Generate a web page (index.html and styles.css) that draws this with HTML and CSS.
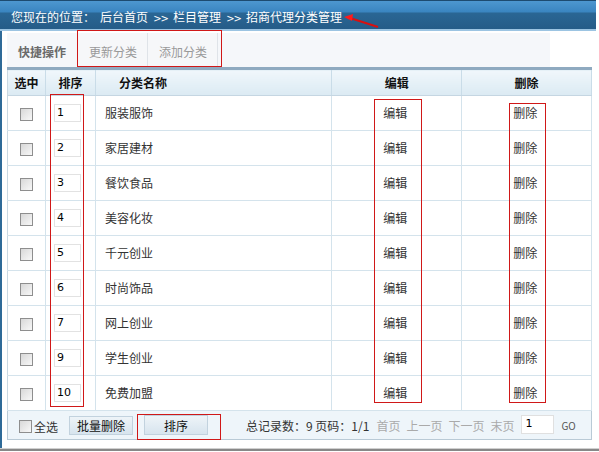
FILE: index.html
```html
<!DOCTYPE html>
<html>
<head>
<meta charset="utf-8">
<link rel="stylesheet" href="styles.css">
</head>
<body>
<div class="topbar">
  <span class="crumb">您现在的位置：</span>
  <span class="path">后台首页<span class="sep">&gt;&gt;</span>栏目管理<span class="sep">&gt;&gt;</span>招商代理分类管理</span>
  <svg class="arrow" width="36" height="16" viewBox="0 0 36 16"><path d="M6 4 L34 13" stroke="#d81010" stroke-width="2" fill="none"/><path d="M0 3 L9 0 L8 7 Z" fill="#ff1a1a"/></svg>
</div>
<div class="main">
  <div class="tabs">
    <span class="tab-title">快捷操作</span>
    <div class="tabgroup">
      <span class="tab">更新分类</span>
      <span class="tab">添加分类</span>
    </div>
  </div>
  <table class="grid">
    <thead>
      <tr><th class="c1">选中</th><th class="c2">排序</th><th class="c3">分类名称</th><th class="c4">编辑</th><th class="c5">删除</th></tr>
    </thead>
    <tbody>
      <tr><td><span class="cb"></span></td><td><span class="num">1</span></td><td class="name">服装服饰</td><td class="ed">编辑</td><td class="del">删除</td></tr>
      <tr><td><span class="cb"></span></td><td><span class="num">2</span></td><td class="name">家居建材</td><td class="ed">编辑</td><td class="del">删除</td></tr>
      <tr><td><span class="cb"></span></td><td><span class="num">3</span></td><td class="name">餐饮食品</td><td class="ed">编辑</td><td class="del">删除</td></tr>
      <tr><td><span class="cb"></span></td><td><span class="num">4</span></td><td class="name">美容化妆</td><td class="ed">编辑</td><td class="del">删除</td></tr>
      <tr><td><span class="cb"></span></td><td><span class="num">5</span></td><td class="name">千元创业</td><td class="ed">编辑</td><td class="del">删除</td></tr>
      <tr><td><span class="cb"></span></td><td><span class="num">6</span></td><td class="name">时尚饰品</td><td class="ed">编辑</td><td class="del">删除</td></tr>
      <tr><td><span class="cb"></span></td><td><span class="num">7</span></td><td class="name">网上创业</td><td class="ed">编辑</td><td class="del">删除</td></tr>
      <tr><td><span class="cb"></span></td><td><span class="num">9</span></td><td class="name">学生创业</td><td class="ed">编辑</td><td class="del">删除</td></tr>
      <tr><td><span class="cb"></span></td><td><span class="num">10</span></td><td class="name">免费加盟</td><td class="ed">编辑</td><td class="del">删除</td></tr>
    </tbody>
  </table>
  <div class="footer">
    <span class="cb"></span><span class="all">全选</span>
    <span class="btn btn-del">批量删除</span>
    <span class="btn btn-sort">排序</span>
    <span class="stats">总记录数：9 页码：1/1</span>
    <span class="pg">首页</span><span class="pg">上一页</span><span class="pg">下一页</span><span class="pg">末页</span>
    <span class="pginput">1</span>
    <span class="go">GO</span>
  </div>
  <div class="mark mark-tabs"></div>
  <div class="mark mark-sort"></div>
  <div class="mark mark-ed"></div>
  <div class="mark mark-del"></div>
  <div class="mark mark-btn"></div>
</div>
<div class="bottomline"></div>
</body>
</html>
```

FILE: styles.css
```css
html, body {
  margin: 0;
  padding: 0;
  background: #ffffff;
  font-family: "Noto Sans CJK SC", "DejaVu Sans", sans-serif;
  font-size: 12px;
  color: #222;
}
.topbar {
  position: relative;
  width: 596px;
  height: 31px;
  border-top: 1px solid #1d4b70;
  border-bottom: 2px solid #9cc4e2;
  background: linear-gradient(to bottom, #4d97d0 0px, #3a85c0 11px, #2a6694 12px, #255c88 28px);
  display: flex;
  align-items: center;
  padding-left: 11px;
  padding-top: 3px;
  box-sizing: border-box;
  color: #fff;
  font-size: 12px;
}
.crumb { margin-right: 5px; }
.sep {
  display: inline-block;
  width: 25px;
  text-align: center;
  font-family: "DejaVu Sans", sans-serif;
  font-size: 10px;
  letter-spacing: -1px;
}
.arrow { position: absolute; left: 344px; top: 13px; }
.main {
  position: relative;
  border-left: 2px solid #2e6a98;
  height: 417px;
  padding-left: 5px;
  padding-top: 2px;
  box-sizing: border-box;
}
.tabs {
  width: 543px;
  height: 34px;
  background: #f5f7fa;
  display: flex;
  align-items: flex-end;
}
.tab-title {
  font-weight: bold;
  color: #6a6a6a;
  padding: 0 0 7px 11px;
  width: 59px;
}
.tabgroup { display: flex; height: 34px; align-items: stretch; }
.tab {
  display: flex;
  align-items: flex-end;
  padding: 0 10px 7px 11px;
  color: #999;
  border-left: 1px solid #dfe3e8;
  background: #f6f7f9;
}
.tab + .tab { border-right: 1px solid #dfe3e8; }
.grid {
  width: 585px;
  border-collapse: collapse;
  border-top: 3px solid #8faac0;
  border-left: 1px solid #c9d8e2;
  border-right: 1px solid #b5c8d6;
  line-height: 16px;
}
.grid th {
  background: linear-gradient(to bottom, #f0f7fb, #dbeaf3);
  font-weight: bold;
  color: #111;
  border-right: 1px solid #c9dce8;
  border-bottom: 1px solid #c5d6e2;
  padding: 0;
  text-align: center;
}
.grid thead tr { height: 27px; }
.grid tbody tr { height: 35px; }
.grid .c1 { width: 37px; }
.grid .c2 { width: 49px; }
.grid .c3 { width: 237px; text-align: left; padding-left: 23px; box-sizing: border-box; }
.grid .c4 { width: 129px; }
.grid .c5 { width: 129px; }
.grid td {
  border-right: 1px solid #d4e3ec;
  border-bottom: 1px solid #d4e3ec;
  padding: 0;
  text-align: center;
  color: #333;
}
.grid td .cb { display: block; margin: 2px auto 0; }
.cb {
  display: inline-block;
  width: 11px;
  height: 11px;
  border: 1px solid #8e8e8e;
  background: linear-gradient(135deg, #d8d8d8, #f8f8f8);
}
.num {
  display: block;
  width: 27px;
  height: 18px;
  margin-left: 8px;
  border: 1px solid #e2e2e2;
  text-align: left;
  padding-left: 2px;
  box-sizing: border-box;
  font-family: "DejaVu Sans", sans-serif;
  font-size: 11px;
  line-height: 16px;
  color: #000;
}
.grid td.name { text-align: left; padding-left: 9px; }
.grid td.ed { text-align: left; padding-left: 51px; }
.grid td.del { text-align: left; padding-left: 51px; }
.footer {
  width: 585px;
  height: 29px;
  background: #eef5fa;
  border: 1px solid #b9cad6;
  border-top: none;
  box-sizing: border-box;
  display: flex;
  align-items: center;
  padding-left: 11px;
  color: #333;
}
.footer .cb { margin-top: 2px; }
.all { margin-left: 2px; margin-top: 3px; }
.btn {
  display: inline-flex;
  align-items: center;
  justify-content: center;
  height: 19px;
  border: 1px solid #c2d2de;
  background: linear-gradient(to bottom, #eef4f8, #d7e4ee);
  color: #111;
  box-sizing: border-box;
}
.btn-del { width: 64px; margin-left: 11px; }
.btn-sort { width: 64px; height: 20px; margin-left: 11px; }
.stats { margin-left: 38px; color: #333; }
.pg { color: #aaa; margin-left: 6px; }
.stats + .pg { margin-left: 7px; }
.pginput {
  display: inline-block;
  width: 33px;
  height: 19px;
  background: #fff;
  border: 1px solid #e0e0e0;
  box-sizing: border-box;
  margin-left: 7px;
  font-family: "DejaVu Sans", sans-serif;
  font-size: 11px;
  line-height: 15px;
  padding-left: 3px;
  color: #000;
  margin-top: -2px;
}
.go { margin-left: 7px; color: #555; font-size: 10px; }
.bottomline {
  height: 2px;
  border-top: 1px solid #d0d0d0;
  background: #888;
  width: 599px;
}
.mark { position: absolute; border: 1px solid #d01818; }
.mark-tabs { left: 75px; top: -1px; width: 143px; height: 35px; }
.mark-sort { left: 48px; top: 63px; width: 32px; height: 311px; }
.mark-ed { left: 372px; top: 68px; width: 46px; height: 302px; }
.mark-del { left: 507px; top: 72px; width: 35px; height: 298px; }
.mark-btn { left: 135px; top: 383px; width: 82px; height: 24px; }
```
